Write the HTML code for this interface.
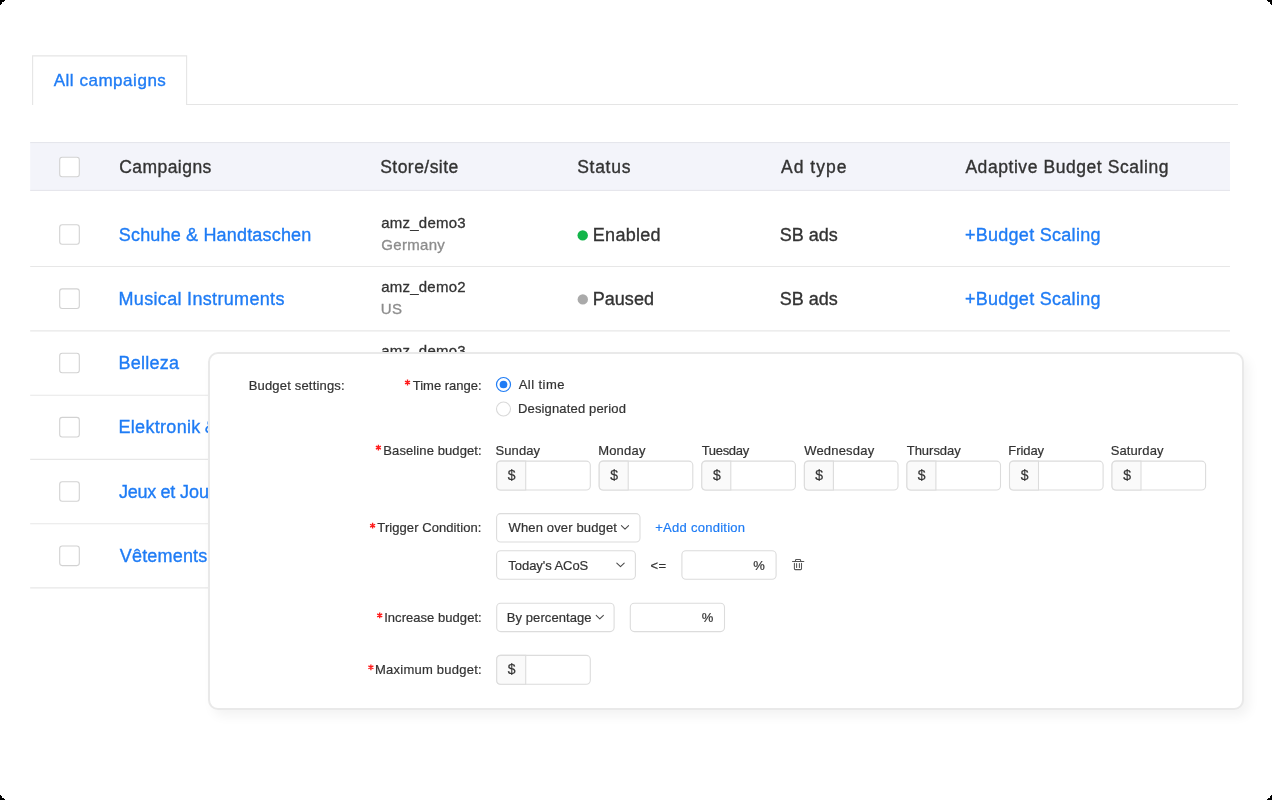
<!DOCTYPE html>
<html>
<head>
<meta charset="utf-8">
<title>Adaptive Budget Scaling</title>
<style>
*{box-sizing:border-box;margin:0;padding:0}
html,body{width:1272px;height:800px;overflow:hidden;background:#000}
body{font-family:"Liberation Sans",sans-serif;color:#333;position:relative}
.page{position:absolute;left:0;top:0;width:1272px;height:800px;background:#fff;overflow:hidden;will-change:transform}
.t{position:absolute;white-space:nowrap;font-family:"Liberation Sans",sans-serif;}
svg{position:absolute;left:0;top:0;width:1272px;height:800px;overflow:visible}
.modal{position:absolute;left:208px;top:352px;width:1036px;height:358px;background:#fff;border:2px solid #e9e9e9;border-radius:10px;box-shadow:5px 6px 12px rgba(0,0,0,0.05)}
</style>
</head>
<body>
<div class="page">
  <!-- table layer shapes -->
  <svg viewBox="0 0 1272 800">
    <!-- tab -->
    <path d="M32.6,105 V55.9 H186.6 V104.5 H1238" fill="none" stroke="#e5e5e5" stroke-width="1.1"/>
    <!-- header -->
    <rect x="30.2" y="142.5" width="1199.8" height="48" fill="#f3f4fa"/>
    <path d="M30.2,142.6 H1230 M30.2,190.4 H1230" stroke="#e3e4ea" stroke-width="1"/>
    <!-- row lines -->
    <path d="M30.2,266.5 H1230 M30.2,330.9 H1230 M30.2,395.2 H1230 M30.2,459.4 H1230 M30.2,523.7 H1230 M30.2,587.8 H1230" stroke="#e7e7e7" stroke-width="1.15"/>
    <!-- checkboxes -->
    <g fill="#fff" stroke="#d2d2d2" stroke-width="1.1">
      <rect x="59.7" y="157.2" width="19.6" height="19.6" rx="2.5"/>
      <rect x="59.7" y="224.7" width="19.6" height="19.6" rx="2.5"/>
      <rect x="59.7" y="288.9" width="19.6" height="19.6" rx="2.5"/>
      <rect x="59.7" y="353.2" width="19.6" height="19.6" rx="2.5"/>
      <rect x="59.7" y="417.4" width="19.6" height="19.6" rx="2.5"/>
      <rect x="59.7" y="481.7" width="19.6" height="19.6" rx="2.5"/>
      <rect x="59.7" y="546.0" width="19.6" height="19.6" rx="2.5"/>
    </g>
    <!-- status dots -->
    <circle cx="582.7" cy="235.4" r="5.2" fill="#13b54a"/>
    <circle cx="582.8" cy="299.4" r="5.2" fill="#aaaaaa"/>
  </svg>
  <div class="t" id="tab" style="left:53.66px;top:71.00px;font-size:17px;line-height:19px;color:#1f7cf5;-webkit-text-stroke:0.35px;letter-spacing:0.532px">All campaigns</div>
  <div class="t" id="h1" style="left:119.16px;top:157.10px;font-size:17.5px;line-height:20px;color:#333333;-webkit-text-stroke:0.35px;letter-spacing:0.458px">Campaigns</div>
  <div class="t" id="h2" style="left:380.22px;top:157.10px;font-size:17.5px;line-height:20px;color:#333333;-webkit-text-stroke:0.35px;letter-spacing:0.454px">Store/site</div>
  <div class="t" id="h3" style="left:577.13px;top:157.10px;font-size:17.5px;line-height:20px;color:#333333;-webkit-text-stroke:0.35px;letter-spacing:0.736px">Status</div>
  <div class="t" id="h4" style="left:781.01px;top:157.10px;font-size:17.5px;line-height:20px;color:#333333;-webkit-text-stroke:0.35px;letter-spacing:1.003px">Ad type</div>
  <div class="t" id="h5" style="left:965.39px;top:157.10px;font-size:17.5px;line-height:20px;color:#333333;-webkit-text-stroke:0.35px;letter-spacing:0.563px">Adaptive Budget Scaling</div>
  <div class="t" id="n1" style="left:118.79px;top:224.70px;font-size:18px;line-height:20px;color:#1f7cf5;-webkit-text-stroke:0.35px;letter-spacing:0.177px">Schuhe &amp; Handtaschen</div>
  <div class="t" id="n2" style="left:118.49px;top:288.90px;font-size:18px;line-height:20px;color:#1f7cf5;-webkit-text-stroke:0.35px;letter-spacing:0.328px">Musical Instruments</div>
  <div class="t" id="n3" style="left:118.48px;top:353.10px;font-size:18px;line-height:20px;color:#1f7cf5;-webkit-text-stroke:0.35px;letter-spacing:0.236px">Belleza</div>
  <div class="t" id="n4" style="left:118.49px;top:417.40px;font-size:18px;line-height:20px;color:#1f7cf5;-webkit-text-stroke:0.35px;letter-spacing:0.313px">Elektronik</div>
  <div class="t" id="n4b" style="left:204.76px;top:417.40px;font-size:18px;line-height:20px;color:#1f7cf5;-webkit-text-stroke:0.35px">&amp; Foto</div>
  <div class="t" id="n5" style="left:118.96px;top:481.60px;font-size:18px;line-height:20px;color:#1f7cf5;-webkit-text-stroke:0.35px;letter-spacing:-0.283px">Jeux et</div>
  <div class="t" id="n5b" style="left:179.96px;top:481.60px;font-size:18px;line-height:20px;color:#1f7cf5;-webkit-text-stroke:0.35px">Jouets</div>
  <div class="t" id="n6" style="left:119.76px;top:545.80px;font-size:18px;line-height:20px;color:#1f7cf5;-webkit-text-stroke:0.35px;letter-spacing:0.182px">Vêtements</div>
  <div class="t" id="s1" style="left:381.13px;top:213.80px;font-size:15px;line-height:17px;color:#333333;-webkit-text-stroke:0.3px;letter-spacing:0.248px">amz_demo3</div>
  <div class="t" id="g1" style="left:381.27px;top:235.70px;font-size:15px;line-height:17px;color:#8c8c8c;-webkit-text-stroke:0.3px;letter-spacing:0.305px">Germany</div>
  <div class="t" id="s2" style="left:381.13px;top:278.00px;font-size:15px;line-height:17px;color:#333333;-webkit-text-stroke:0.3px;letter-spacing:0.244px">amz_demo2</div>
  <div class="t" id="g2" style="left:380.86px;top:300.00px;font-size:15px;line-height:17px;color:#8c8c8c;-webkit-text-stroke:0.3px;letter-spacing:0.350px">US</div>
  <div class="t" id="s3" style="left:381.13px;top:342.30px;font-size:15px;line-height:17px;color:#333333;-webkit-text-stroke:0.3px;letter-spacing:0.248px">amz_demo3</div>
  <div class="t" id="e1" style="left:592.83px;top:224.80px;font-size:18px;line-height:20px;color:#333333;-webkit-text-stroke:0.35px;letter-spacing:0.271px">Enabled</div>
  <div class="t" id="e2" style="left:592.83px;top:289.00px;font-size:18px;line-height:20px;color:#333333;-webkit-text-stroke:0.35px;letter-spacing:0.005px">Paused</div>
  <div class="t" id="a1" style="left:779.79px;top:224.80px;font-size:18px;line-height:20px;color:#333333;-webkit-text-stroke:0.35px;letter-spacing:-0.010px">SB ads</div>
  <div class="t" id="a2" style="left:779.79px;top:289.00px;font-size:18px;line-height:20px;color:#333333;-webkit-text-stroke:0.35px;letter-spacing:-0.010px">SB ads</div>
  <div class="t" id="b1" style="left:964.90px;top:224.50px;font-size:18px;line-height:20px;color:#1f7cf5;-webkit-text-stroke:0.35px;letter-spacing:0.285px">+Budget Scaling</div>
  <div class="t" id="b2" style="left:964.90px;top:288.70px;font-size:18px;line-height:20px;color:#1f7cf5;-webkit-text-stroke:0.35px;letter-spacing:0.285px">+Budget Scaling</div>

  <!-- modal -->
  <div class="modal"></div>
  <svg viewBox="0 0 1272 800">
    <!-- radios -->
    <circle cx="503.5" cy="384.5" r="7" fill="#fff" stroke="#1f7cf5" stroke-width="1.2"/>
    <circle cx="503.5" cy="384.5" r="3.85" fill="#1f7cf5"/>
    <circle cx="503.5" cy="409.0" r="7" fill="#fff" stroke="#d9d9d9" stroke-width="1.1"/>
    <!-- weekday input groups -->
    <g><rect x="496.7" y="461.1" width="93.6" height="28.9" rx="4" fill="#fff" stroke="#dcdcdc" stroke-width="1.1"/><path d="M500.7,461.1 H525.7 V490.0 H500.7 Q496.7,490.0 496.7,486.0 V465.1 Q496.7,461.1 500.7,461.1 Z" fill="#fafafa" stroke="#dcdcdc" stroke-width="1.1"/></g>
    <g><rect x="599.2" y="461.1" width="93.6" height="28.9" rx="4" fill="#fff" stroke="#dcdcdc" stroke-width="1.1"/><path d="M603.2,461.1 H628.2 V490.0 H603.2 Q599.2,490.0 599.2,486.0 V465.1 Q599.2,461.1 603.2,461.1 Z" fill="#fafafa" stroke="#dcdcdc" stroke-width="1.1"/></g>
    <g><rect x="701.8" y="461.1" width="93.6" height="28.9" rx="4" fill="#fff" stroke="#dcdcdc" stroke-width="1.1"/><path d="M705.8,461.1 H730.8 V490.0 H705.8 Q701.8,490.0 701.8,486.0 V465.1 Q701.8,461.1 705.8,461.1 Z" fill="#fafafa" stroke="#dcdcdc" stroke-width="1.1"/></g>
    <g><rect x="804.4" y="461.1" width="93.6" height="28.9" rx="4" fill="#fff" stroke="#dcdcdc" stroke-width="1.1"/><path d="M808.4,461.1 H833.4 V490.0 H808.4 Q804.4,490.0 804.4,486.0 V465.1 Q804.4,461.1 808.4,461.1 Z" fill="#fafafa" stroke="#dcdcdc" stroke-width="1.1"/></g>
    <g><rect x="906.9" y="461.1" width="93.6" height="28.9" rx="4" fill="#fff" stroke="#dcdcdc" stroke-width="1.1"/><path d="M910.9,461.1 H935.9 V490.0 H910.9 Q906.9,490.0 906.9,486.0 V465.1 Q906.9,461.1 910.9,461.1 Z" fill="#fafafa" stroke="#dcdcdc" stroke-width="1.1"/></g>
    <g><rect x="1009.5" y="461.1" width="93.6" height="28.9" rx="4" fill="#fff" stroke="#dcdcdc" stroke-width="1.1"/><path d="M1013.5,461.1 H1038.5 V490.0 H1013.5 Q1009.5,490.0 1009.5,486.0 V465.1 Q1009.5,461.1 1013.5,461.1 Z" fill="#fafafa" stroke="#dcdcdc" stroke-width="1.1"/></g>
    <g><rect x="1112.0" y="461.1" width="93.6" height="28.9" rx="4" fill="#fff" stroke="#dcdcdc" stroke-width="1.1"/><path d="M1116.0,461.1 H1141.0 V490.0 H1116.0 Q1112.0,490.0 1112.0,486.0 V465.1 Q1112.0,461.1 1116.0,461.1 Z" fill="#fafafa" stroke="#dcdcdc" stroke-width="1.1"/></g>
    <g><rect x="496.7" y="655.4" width="93.6" height="28.9" rx="4" fill="#fff" stroke="#dcdcdc" stroke-width="1.1"/><path d="M500.7,655.4 H525.7 V684.3 H500.7 Q496.7,684.3 496.7,680.3 V659.4 Q496.7,655.4 500.7,655.4 Z" fill="#fafafa" stroke="#dcdcdc" stroke-width="1.1"/></g>
    <!-- selects / inputs -->
    <g fill="#fff" stroke="#dcdcdc" stroke-width="1.1">
      <rect x="496.6" y="513.6" width="143.4" height="28.4" rx="4"/>
      <rect x="496.6" y="550.8" width="138.8" height="28.4" rx="4"/>
      <rect x="681.9" y="550.8" width="94.2" height="28.4" rx="4"/>
      <rect x="496.7" y="603.3" width="117.4" height="28.3" rx="4"/>
      <rect x="630.3" y="603.3" width="94.2" height="28.3" rx="4"/>
    </g>
    <!-- chevrons -->
    <g fill="none" stroke="#4a4a4a" stroke-width="1.05" stroke-linecap="round" stroke-linejoin="round">
      <path d="M621.4,525.6 L625.0,529.2 L628.6,525.6"/>
      <path d="M616.8,563.1 L620.5,566.7 L624.2,563.1"/>
      <path d="M596.2,615.3 L599.8,618.9 L603.4,615.3"/>
    </g>
    <!-- trash -->
    <g fill="none" stroke="#555" stroke-width="1.05" stroke-linecap="round" stroke-linejoin="round">
      <path d="M792.5,561.4 H803.8"/>
      <path d="M795.5,561.4 V560.3 Q795.5,559.5 796.3,559.5 H799.8 Q800.6,559.5 800.6,560.3 V561.4"/>
      <path d="M794.4,563.2 V568.7 Q794.4,569.6 795.3,569.6 H800.6 Q801.5,569.6 801.5,568.7 V563.2"/>
      <path d="M796.6,563.4 V567.5 M799.4,563.4 V567.5"/>
    </g>
    <!-- page corners -->
    <g fill="#000" shape-rendering="crispEdges"><rect x="0" y="0" width="5" height="1"/><rect x="1267" y="0" width="5" height="1"/><rect x="0" y="799" width="5" height="1"/><rect x="1267" y="799" width="5" height="1"/><rect x="0" y="1" width="4" height="1"/><rect x="1268" y="1" width="4" height="1"/><rect x="0" y="798" width="4" height="1"/><rect x="1268" y="798" width="4" height="1"/><rect x="0" y="2" width="2" height="1"/><rect x="1270" y="2" width="2" height="1"/><rect x="0" y="797" width="2" height="1"/><rect x="1270" y="797" width="2" height="1"/><rect x="0" y="3" width="2" height="1"/><rect x="1270" y="3" width="2" height="1"/><rect x="0" y="796" width="2" height="1"/><rect x="1270" y="796" width="2" height="1"/><rect x="0" y="4" width="1" height="1"/><rect x="1271" y="4" width="1" height="1"/><rect x="0" y="795" width="1" height="1"/><rect x="1271" y="795" width="1" height="1"/></g>
    <!-- required stars -->
    <path d="M407.50,379.60 L407.50,385.40 M404.99,381.05 L410.01,383.95 M410.01,381.05 L404.99,383.95" stroke="#ff1a1a" stroke-width="1.35" fill="none"/>
    <path d="M378.40,444.70 L378.40,450.50 M375.89,446.15 L380.91,449.05 M380.91,446.15 L375.89,449.05" stroke="#ff1a1a" stroke-width="1.35" fill="none"/>
    <path d="M372.60,522.80 L372.60,528.60 M370.09,524.25 L375.11,527.15 M375.11,524.25 L370.09,527.15" stroke="#ff1a1a" stroke-width="1.35" fill="none"/>
    <path d="M379.70,612.50 L379.70,618.30 M377.19,613.95 L382.21,616.85 M382.21,613.95 L377.19,616.85" stroke="#ff1a1a" stroke-width="1.35" fill="none"/>
    <path d="M370.90,664.40 L370.90,670.20 M368.39,665.85 L373.41,668.75 M373.41,665.85 L368.39,668.75" stroke="#ff1a1a" stroke-width="1.35" fill="none"/>
  </svg>
  <div class="t" id="m0" style="left:248.65px;top:377.50px;font-size:13px;line-height:15px;color:#333333;-webkit-text-stroke:0.2px;letter-spacing:0.183px">Budget settings:</div>
  <div class="t" id="l1" style="left:412.76px;top:377.50px;font-size:13px;line-height:15px;color:#333333;-webkit-text-stroke:0.2px">Time range:</div>
  <div class="t" id="r1" style="left:518.78px;top:377.00px;font-size:13px;line-height:15px;color:#333333;-webkit-text-stroke:0.2px;letter-spacing:0.434px">All time</div>
  <div class="t" id="r2" style="left:517.96px;top:400.90px;font-size:13px;line-height:15px;color:#333333;-webkit-text-stroke:0.2px;letter-spacing:0.157px">Designated period</div>
  <div class="t" id="l2" style="left:383.31px;top:442.60px;font-size:13px;line-height:15px;color:#333333;-webkit-text-stroke:0.2px;letter-spacing:0.103px">Baseline budget:</div>
  <div class="t" id="d1" style="left:495.60px;top:442.90px;font-size:13px;line-height:15px;color:#333333;-webkit-text-stroke:0.2px;letter-spacing:0.064px">Sunday</div>
  <div class="t" id="d2" style="left:598.18px;top:442.90px;font-size:13px;line-height:15px;color:#333333;-webkit-text-stroke:0.2px;letter-spacing:0.195px">Monday</div>
  <div class="t" id="d3" style="left:701.63px;top:442.90px;font-size:13px;line-height:15px;color:#333333;-webkit-text-stroke:0.2px;letter-spacing:-0.299px">Tuesday</div>
  <div class="t" id="d4" style="left:804.21px;top:442.90px;font-size:13px;line-height:15px;color:#333333;-webkit-text-stroke:0.2px;letter-spacing:0.190px">Wednesday</div>
  <div class="t" id="d5" style="left:906.76px;top:442.90px;font-size:13px;line-height:15px;color:#333333;-webkit-text-stroke:0.2px;letter-spacing:-0.023px">Thursday</div>
  <div class="t" id="d6" style="left:1008.31px;top:442.90px;font-size:13px;line-height:15px;color:#333333;-webkit-text-stroke:0.2px;letter-spacing:-0.072px">Friday</div>
  <div class="t" id="d7" style="left:1110.67px;top:442.90px;font-size:13px;line-height:15px;color:#333333;-webkit-text-stroke:0.2px;letter-spacing:0.114px">Saturday</div>
  <div class="t" id="l3" style="left:377.36px;top:520.40px;font-size:13px;line-height:15px;color:#333333;-webkit-text-stroke:0.2px;letter-spacing:0.067px">Trigger Condition:</div>
  <div class="t" id="c1" style="left:508.53px;top:520.40px;font-size:13px;line-height:15px;color:#333333;-webkit-text-stroke:0.2px;letter-spacing:0.145px">When over budget</div>
  <div class="t" id="c2" style="left:655.21px;top:520.40px;font-size:13px;line-height:15px;color:#1f7cf5;-webkit-text-stroke:0.2px;letter-spacing:0.269px">+Add condition</div>
  <div class="t" id="c3" style="left:508.37px;top:557.80px;font-size:13px;line-height:15px;color:#333333;-webkit-text-stroke:0.2px;letter-spacing:-0.056px">Today's ACoS</div>
  <div class="t" id="c4" style="left:650.61px;top:557.80px;font-size:13px;line-height:15px;color:#333333;-webkit-text-stroke:0.2px;letter-spacing:0.338px">&lt;=</div>
  <div class="t" id="c5" style="left:753.17px;top:557.60px;font-size:13px;line-height:15px;color:#333333;-webkit-text-stroke:0.2px">%</div>
  <div class="t" id="l4" style="left:384.17px;top:610.40px;font-size:13px;line-height:15px;color:#333333;-webkit-text-stroke:0.2px;letter-spacing:0.045px">Increase budget:</div>
  <div class="t" id="c6" style="left:506.81px;top:610.40px;font-size:13px;line-height:15px;color:#333333;-webkit-text-stroke:0.2px;letter-spacing:0.078px">By percentage</div>
  <div class="t" id="c7" style="left:701.85px;top:610.20px;font-size:13px;line-height:15px;color:#333333;-webkit-text-stroke:0.2px">%</div>
  <div class="t" id="l5" style="left:375.03px;top:662.30px;font-size:13px;line-height:15px;color:#333333;-webkit-text-stroke:0.2px;letter-spacing:0.237px">Maximum budget:</div>
  <div class="t" id="u1" style="left:507.64px;top:466.70px;font-size:14px;line-height:16px;color:#333333;-webkit-text-stroke:0.2px">$</div>
  <div class="t" id="u2" style="left:610.20px;top:466.70px;font-size:14px;line-height:16px;color:#333333;-webkit-text-stroke:0.2px">$</div>
  <div class="t" id="u3" style="left:712.93px;top:466.70px;font-size:14px;line-height:16px;color:#333333;-webkit-text-stroke:0.2px">$</div>
  <div class="t" id="u4" style="left:815.35px;top:466.70px;font-size:14px;line-height:16px;color:#333333;-webkit-text-stroke:0.2px">$</div>
  <div class="t" id="u5" style="left:917.72px;top:466.70px;font-size:14px;line-height:16px;color:#333333;-webkit-text-stroke:0.2px">$</div>
  <div class="t" id="u6" style="left:1020.65px;top:466.70px;font-size:14px;line-height:16px;color:#333333;-webkit-text-stroke:0.2px">$</div>
  <div class="t" id="u7" style="left:1123.17px;top:466.70px;font-size:14px;line-height:16px;color:#333333;-webkit-text-stroke:0.2px">$</div>
  <div class="t" id="u8" style="left:507.64px;top:661.00px;font-size:14px;line-height:16px;color:#333333;-webkit-text-stroke:0.2px">$</div>
</div>
</body>
</html>
